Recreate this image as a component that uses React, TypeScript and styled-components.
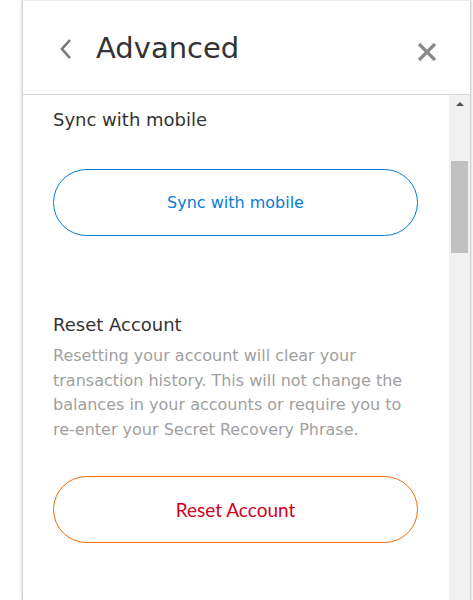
import React from "react";
import styled, { createGlobalStyle } from "styled-components";

const Global = createGlobalStyle`
  html, body { margin: 0; padding: 0; background: #ffffff; }
  body { width: 473px; height: 600px; overflow: hidden; font-family: "DejaVu Sans", "Liberation Sans", sans-serif; }
  * { box-sizing: border-box; }
`;

const Page = styled.div`
  display: flex;
  height: 600px;
  padding-left: 22px;
`;

const Panel = styled.div`
  width: 449px;
  height: 600px;
  display: flex;
  flex-direction: column;
  border-left: 1px solid #d4d4d4;
  border-right: 1px solid #d4d4d4;
  border-top: 1px solid #ececec;
  box-shadow: -1px 0 2px rgba(0, 0, 0, 0.12), 1px 0 2px rgba(0, 0, 0, 0.12);
  background: #fff;
`;

const Header = styled.header`
  height: 94px;
  flex-shrink: 0;
  display: flex;
  align-items: center;
  padding: 0 32px 0 34px;
  border-bottom: 1px solid #d6d6d6;
`;

const BackButton = styled.button`
  border: 0;
  background: none;
  padding: 0;
  width: 18px;
  height: 24px;
  display: flex;
  align-items: center;
  justify-content: center;
  margin-right: 21px;
  margin-top: 2px;
  cursor: pointer;
`;

const Title = styled.h1`
  margin: 0;
  flex: 1;
  font-family: "DejaVu Sans", sans-serif;
  font-weight: 400;
  font-size: 29px;
  color: #333333;
`;

const CloseButton = styled.button`
  border: 0;
  background: none;
  padding: 0;
  width: 22px;
  height: 22px;
  display: flex;
  align-items: center;
  justify-content: center;
  margin-top: 8px;
  cursor: pointer;
`;

const Body = styled.div`
  flex: 1;
  display: flex;
  min-height: 0;
`;

const Content = styled.div`
  flex: 1;
  overflow: hidden;
  padding: 13px 30px 0 30px;
`;

const Section = styled.section<{ $gap: number }>`
  display: flex;
  flex-direction: column;
  margin-bottom: ${(p) => p.$gap}px;
`;

const SectionTitle = styled.h2`
  margin: 0;
  font-size: 18px;
  line-height: 24px;
  font-weight: 400;
  color: #333333;
`;

const Description = styled.p`
  margin: 7px 0 0;
  font-size: 16px;
  line-height: 24.7px;
  color: #9f9f9f;
`;

const PillButton = styled.button<{ $border: string; $color: string; $font: string; $size: number; $top: number }>`
  margin-top: ${(p) => p.$top}px;
  width: 365px;
  height: 67px;
  border-radius: 34px;
  border: 1px solid ${(p) => p.$border};
  background: #fff;
  color: ${(p) => p.$color};
  font-family: ${(p) => p.$font};
  font-size: ${(p) => p.$size}px;
  cursor: pointer;
`;

const Scrollbar = styled.div`
  width: 21px;
  flex-shrink: 0;
  background: #f1f1f1;
  display: flex;
  flex-direction: column;
  align-items: flex-end;
  padding-right: 2px;
`;

const ArrowUp = styled.div`
  width: 17px;
  height: 17px;
  display: flex;
  align-items: center;
  justify-content: center;
  &::before {
    content: "";
    border-left: 4px solid transparent;
    border-right: 4px solid transparent;
    border-bottom: 4px solid #505050;
  }
`;

const Thumb = styled.div<{ $top: number; $size: number }>`
  margin-top: ${(p) => p.$top}px;
  width: 17px;
  height: ${(p) => p.$size}px;
  background: #c1c1c1;
`;

export default function App() {
  return (
    <>
      <Global />
      <Page>
        <Panel>
          <Header>
            <BackButton aria-label="Back">
              <svg width="14" height="22" viewBox="0 0 14 22">
                <path d="M11 2 L3 11 L11 20" fill="none" stroke="#777" strokeWidth="2.6" />
              </svg>
            </BackButton>
            <Title>Advanced</Title>
            <CloseButton aria-label="Close">
              <svg width="20" height="20" viewBox="0 0 20 20">
                <path d="M2 2 L18 18 M18 2 L2 18" stroke="#8a8a8a" strokeWidth="3.2" />
              </svg>
            </CloseButton>
          </Header>
          <Body>
            <Content>
              <Section $gap={77}>
                <SectionTitle>Sync with mobile</SectionTitle>
                <PillButton $top={37} $size={16} $border="#037dd6" $color="#037dd6" $font={'"DejaVu Sans", sans-serif'}>
                  Sync with mobile
                </PillButton>
              </Section>
              <Section $gap={0}>
                <SectionTitle>Reset Account</SectionTitle>
                <Description>
                  Resetting your account will clear your transaction history. This will not change the balances in your
                  accounts or require you to re-enter your Secret Recovery Phrase.
                </Description>
                <PillButton $top={33} $size={19} $border="#f66a0a" $color="#d0021b" $font={'"Lato", sans-serif'}>
                  Reset Account
                </PillButton>
              </Section>
            </Content>
            <Scrollbar>
              <ArrowUp />
              <Thumb $top={49} $size={92} />
            </Scrollbar>
          </Body>
        </Panel>
      </Page>
    </>
  );
}
